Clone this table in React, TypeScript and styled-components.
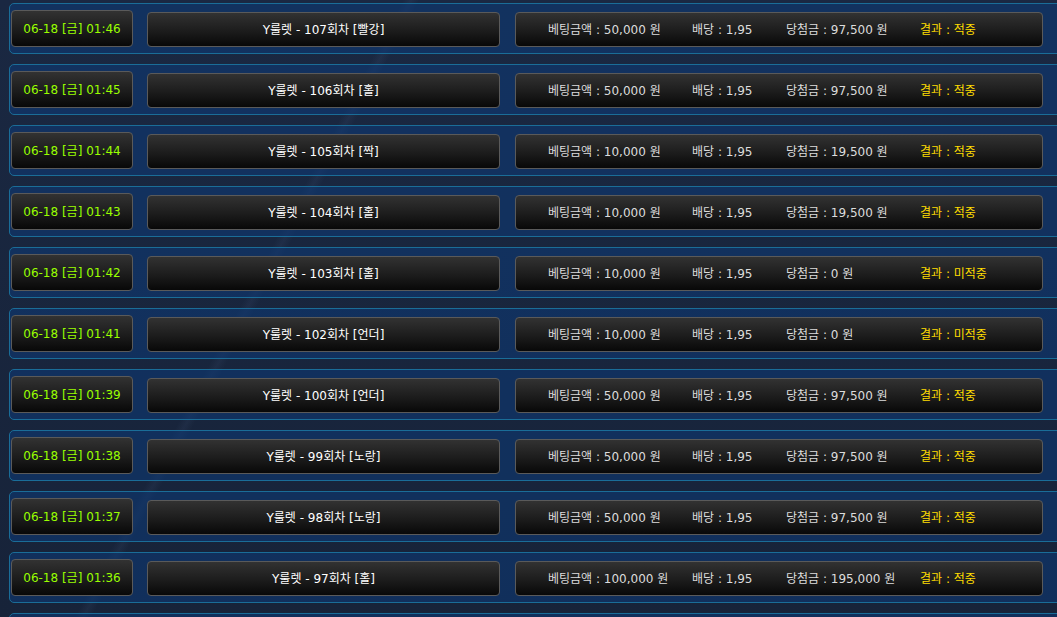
import React from 'react';
import styled, { createGlobalStyle } from 'styled-components';

type Bet = {
  time: string;
  round: number;
  pick: string;
  stake: string;
  payout: string;
  result: string;
};

const bets: Bet[] = [
  { time: '01:46', round: 107, pick: '빨강', stake: '50,000', payout: '97,500', result: '적중' },
  { time: '01:45', round: 106, pick: '홀', stake: '50,000', payout: '97,500', result: '적중' },
  { time: '01:44', round: 105, pick: '짝', stake: '10,000', payout: '19,500', result: '적중' },
  { time: '01:43', round: 104, pick: '홀', stake: '10,000', payout: '19,500', result: '적중' },
  { time: '01:42', round: 103, pick: '홀', stake: '10,000', payout: '0', result: '미적중' },
  { time: '01:41', round: 102, pick: '언더', stake: '10,000', payout: '0', result: '미적중' },
  { time: '01:39', round: 100, pick: '언더', stake: '50,000', payout: '97,500', result: '적중' },
  { time: '01:38', round: 99, pick: '노랑', stake: '50,000', payout: '97,500', result: '적중' },
  { time: '01:37', round: 98, pick: '노랑', stake: '50,000', payout: '97,500', result: '적중' },
  { time: '01:36', round: 97, pick: '홀', stake: '100,000', payout: '195,000', result: '적중' },
  { time: '01:35', round: 96, pick: '짝', stake: '50,000', payout: '97,500', result: '적중' },
];

const GlobalStyle = createGlobalStyle`
  html, body {
    margin: 0;
    padding: 0;
    height: 617px;
    overflow: hidden;
    background: #19253f;
  }
  body {
    font-family: "DejaVu Sans", "Noto Sans CJK KR", sans-serif;
    font-size: 12px;
  }
`;

const Page = styled.div`
  height: 617px;
  overflow: hidden;
  padding: 3px 0 0 9px;
  box-sizing: border-box;
  display: flex;
  flex-direction: column;
  gap: 10px;
  background:
    linear-gradient(
      118deg,
      rgba(255, 255, 255, 0) 29.1%,
      rgba(140, 170, 220, 0.06) 29.7%,
      rgba(255, 255, 255, 0) 30.3%
    ),
    linear-gradient(180deg, #1a2842 0%, #172339 100%);
`;

const Row = styled.div`
  flex: 0 0 auto;
  box-sizing: border-box;
  width: 1100px;
  height: 51px;
  border: 1px solid #1a6d98;
  border-radius: 5px;
  background: rgba(12, 58, 120, 0.55);
  display: flex;
  align-items: flex-end;
  padding: 0 0 6px 1px;
`;

const Box = styled.div<{ $w: number; $h?: number }>`
  width: ${(p) => p.$w}px;
  height: ${(p) => p.$h ?? 35}px;
  box-sizing: border-box;
  padding-bottom: 2px;
  border: 1px solid #5a5a5a;
  border-radius: 4px;
  background: linear-gradient(180deg, #323232 0%, #1c1c1c 55%, #080808 100%);
  display: flex;
  align-items: center;
  flex: 0 0 auto;
  white-space: nowrap;
`;

const DateBox = styled(Box)`
  justify-content: center;
  color: #99ff00;
  margin-right: 14px;
`;

const TitleBox = styled(Box)`
  justify-content: center;
  color: #ffffff;
  margin-right: 15px;
`;

const InfoBox = styled(Box)`
  display: grid;
  grid-template-columns: 144px 94px 134px auto;
  align-items: center;
  padding-left: 32px;
  color: #dcdcdc;
`;

const Result = styled.span`
  color: #ffdc00;
`;

const BetRow = ({ bet }: { bet: Bet }) => (
  <Row>
    <DateBox $w={122} $h={37}>06-18 [금] {bet.time}</DateBox>
    <TitleBox $w={353}>
      Y룰렛 - {bet.round}회차 [{bet.pick}]
    </TitleBox>
    <InfoBox $w={528}>
      <span>베팅금액 : {bet.stake} 원</span>
      <span>배당 : 1,95</span>
      <span>당첨금 : {bet.payout} 원</span>
      <Result>결과 : {bet.result}</Result>
    </InfoBox>
  </Row>
);

const App = () => (
  <>
    <GlobalStyle />
    <Page>
      {bets.map((b) => (
        <BetRow key={b.round} bet={b} />
      ))}
    </Page>
  </>
);

export default App;
